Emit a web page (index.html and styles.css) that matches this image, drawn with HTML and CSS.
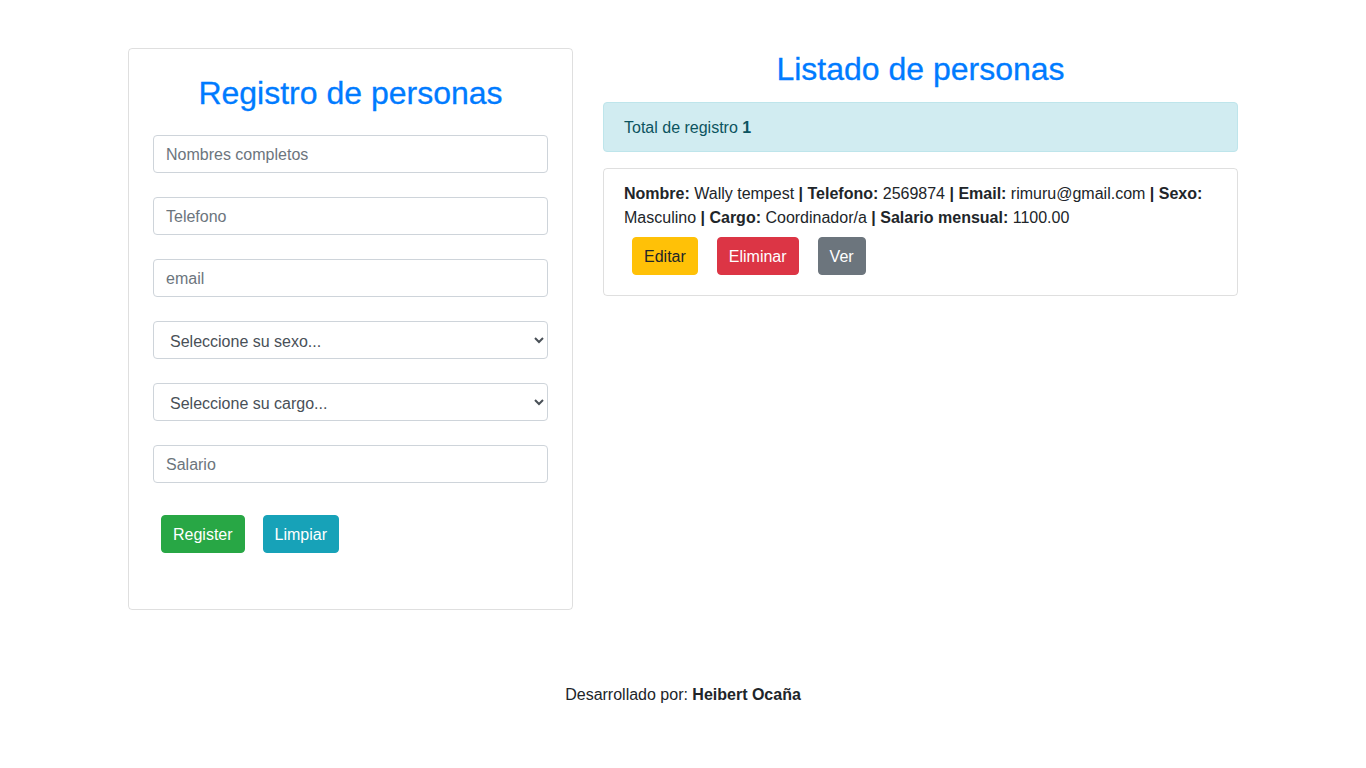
FILE: index.html
```html
<!DOCTYPE html>
<html lang="es">
<head>
<meta charset="utf-8">
<title>Registro de personas</title>
<link rel="stylesheet" href="styles.css">
</head>
<body>
<div class="container">
  <div class="row">
    <div class="col-left">
      <div class="card">
        <h2 class="title">Registro de personas</h2>
        <div class="field"><input class="form-control" type="text" placeholder="Nombres completos"></div>
        <div class="field"><input class="form-control" type="text" placeholder="Telefono"></div>
        <div class="field"><input class="form-control" type="text" placeholder="email"></div>
        <div class="field">
          <select class="form-control select">
            <option>Seleccione su sexo...</option>
            <option>Masculino</option>
            <option>Femenino</option>
          </select>
        </div>
        <div class="field">
          <select class="form-control select">
            <option>Seleccione su cargo...</option>
            <option>Coordinador/a</option>
          </select>
        </div>
        <div class="field"><input class="form-control" type="text" placeholder="Salario"></div>
        <div class="actions">
          <button class="btn btn-success">Register</button>
          <button class="btn btn-info">Limpiar</button>
        </div>
      </div>
    </div>
    <div class="col-right">
      <h2 class="title title-list">Listado de personas</h2>
      <div class="alert">Total de registro <b>1</b></div>
      <div class="list-item">
        <div class="record-text"><b>Nombre:</b> Wally tempest <b>| Telefono:</b> 2569874 <b>|</b> <b>Email:</b> rimuru@gmail.com <b>| Sexo:</b> Masculino <b>|</b> <b>Cargo:</b> Coordinador/a <b>|</b> <b>Salario mensual:</b> 1100.00</div>
        <div class="record-actions">
          <button class="btn btn-warning">Editar</button>
          <button class="btn btn-danger">Eliminar</button>
          <button class="btn btn-secondary">Ver</button>
        </div>
      </div>
    </div>
  </div>
</div>
<footer class="footer">Desarrollado por: <b>Heibert Ocaña</b></footer>
</body>
</html>
```

FILE: styles.css
```css
* { box-sizing: border-box; }

body {
  margin: 0;
  font-family: "Liberation Sans", Arial, sans-serif;
  font-size: 16px;
  line-height: 1.5;
  color: #212529;
  background: #fff;
}

b { font-weight: 700; }

.container {
  width: 1140px;
  margin: 48px auto 0;
  padding: 0 15px;
}

.row {
  display: flex;
  align-items: flex-start;
  margin: 0 -15px;
}

.col-left { width: 475px; padding: 0 15px; }
.col-right { width: 665px; padding: 0 15px; }

.card {
  border: 1px solid rgba(0, 0, 0, 0.125);
  border-radius: 4px;
  padding: 24px;
}

.title {
  margin: 0 0 24px;
  padding-top: 1px;
  height: 38px;
  font-size: 32px;
  font-weight: 500;
  line-height: 1.2;
  color: #007bff;
  text-align: center;
  -webkit-text-stroke: 0.3px #007bff;
}

.title-list { margin-bottom: 16px; padding-top: 2px; height: 38px; }

.field { margin-bottom: 24px; }

.form-control {
  display: block;
  width: 100%;
  height: 38px;
  padding: 7px 12px 5px;
  font-family: inherit;
  font-size: 16px;
  line-height: 1.5;
  color: #495057;
  background: #fff;
  border: 1px solid #ced4da;
  border-radius: 4px;
  outline: none;
}

.form-control::placeholder { color: #6c757d; opacity: 1; }

.select { padding: 6px 12px 4px; }

.actions {
  display: flex;
  gap: 18px;
  padding: 8px;
  margin-bottom: 24px;
}

.btn {
  display: inline-block;
  height: 38px;
  padding: 7px 11px 5px;
  font-family: inherit;
  font-size: 16px;
  line-height: 1.5;
  border: 1px solid transparent;
  border-radius: 4px;
  color: #fff;
  cursor: pointer;
}

.btn-success { background: #28a745; border-color: #28a745; }
.btn-info { background: #17a2b8; border-color: #17a2b8; }
.btn-warning { background: #ffc107; border-color: #ffc107; color: #212529; }
.btn-danger { background: #dc3545; border-color: #dc3545; }
.btn-secondary { background: #6c757d; border-color: #6c757d; }

.alert {
  padding: 13px 20px 11px;
  margin-bottom: 16px;
  background: #d1ecf1;
  border: 1px solid #bee5eb;
  border-radius: 4px;
  color: #0c5460;
}

.list-item {
  border: 1px solid rgba(0, 0, 0, 0.125);
  border-radius: 4px;
  padding: 12px 20px;
}

.record-text { padding-top: 1px; margin-bottom: -1px; }

.record-actions {
  display: flex;
  gap: 19px;
  padding: 8px;
}

.footer {
  margin-top: 73px;
  margin-bottom: 0;
  text-align: center;
}
```
